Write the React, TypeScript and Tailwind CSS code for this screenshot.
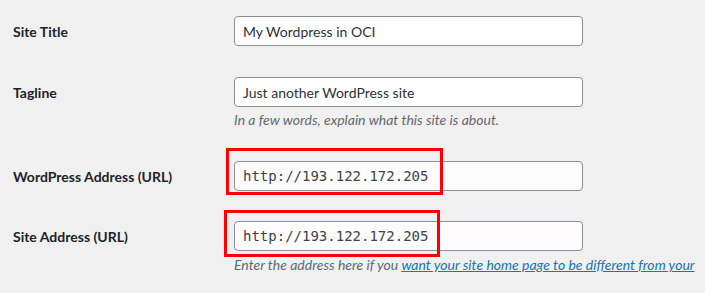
import React from 'react';

const sans = "font-['Lato','Noto_Sans',sans-serif]";

// One settings row: label on the left, field (plus optional note) on the right
const Row = ({ label, children, className = '' }: { label: string; children: React.ReactNode; className?: string }) => (
  <div className={`flex ${className}`}>
    <div className="w-[221px] shrink-0 h-[30px] flex items-center text-[14px] font-bold text-[#1d2327]">{label}</div>
    <div className="flex-1 min-w-0">{children}</div>
  </div>
);

const Field = ({ value, mono = false, marked = false }: { value: string; mono?: boolean; marked?: boolean }) => (
  <div
    className={`w-[349px] h-[30px] flex items-center px-[8px] rounded-[4px] border border-[#8c8f94] text-[14px] text-[#2c3338] ${
      marked ? 'bg-[#fefbfd]' : 'bg-white'
    } ${mono ? "font-['DejaVu_Sans_Mono',monospace] text-[#3c434a]" : ''}`}
  >
    {value}
  </div>
);

export default function App() {
  return (
    <div className={`w-[705px] h-[293px] overflow-hidden bg-[#f0f0f1] pl-[13px] pt-[16px] ${sans}`}>
      <Row label="Site Title">
        <Field value="My Wordpress in OCI" />
      </Row>

      <Row label="Tagline" className="mt-[31px]">
        <Field value="Just another WordPress site" />
        <p className="mt-[3px] leading-5 text-[14px] italic text-[#646970]">In a few words, explain what this site is about.</p>
      </Row>

      <Row label="WordPress Address (URL)" className="mt-[31px]">
        <div className="relative">
          <Field value="http://193.122.172.205" mono marked />
          <div className="absolute left-[-8px] top-[-13px] w-[217px] h-[47px] border-[3px] border-[#ff0000]" />
        </div>
      </Row>

      <Row label="Site Address (URL)" className="mt-[30px]">
        <div className="relative">
          <Field value="http://193.122.172.205" mono marked />
          <div className="absolute left-[-10px] top-[-11px] w-[216px] h-[47px] border-[3px] border-[#ff0000]" />
        </div>
        <p className="mt-[4px] leading-5 text-[14px] italic text-[#646970] whitespace-nowrap">
          Enter the address here if you{' '}
          <a href="#" className="text-[#2271b1] underline">want your site home page to be different from your</a>
        </p>
      </Row>
    </div>
  );
}
